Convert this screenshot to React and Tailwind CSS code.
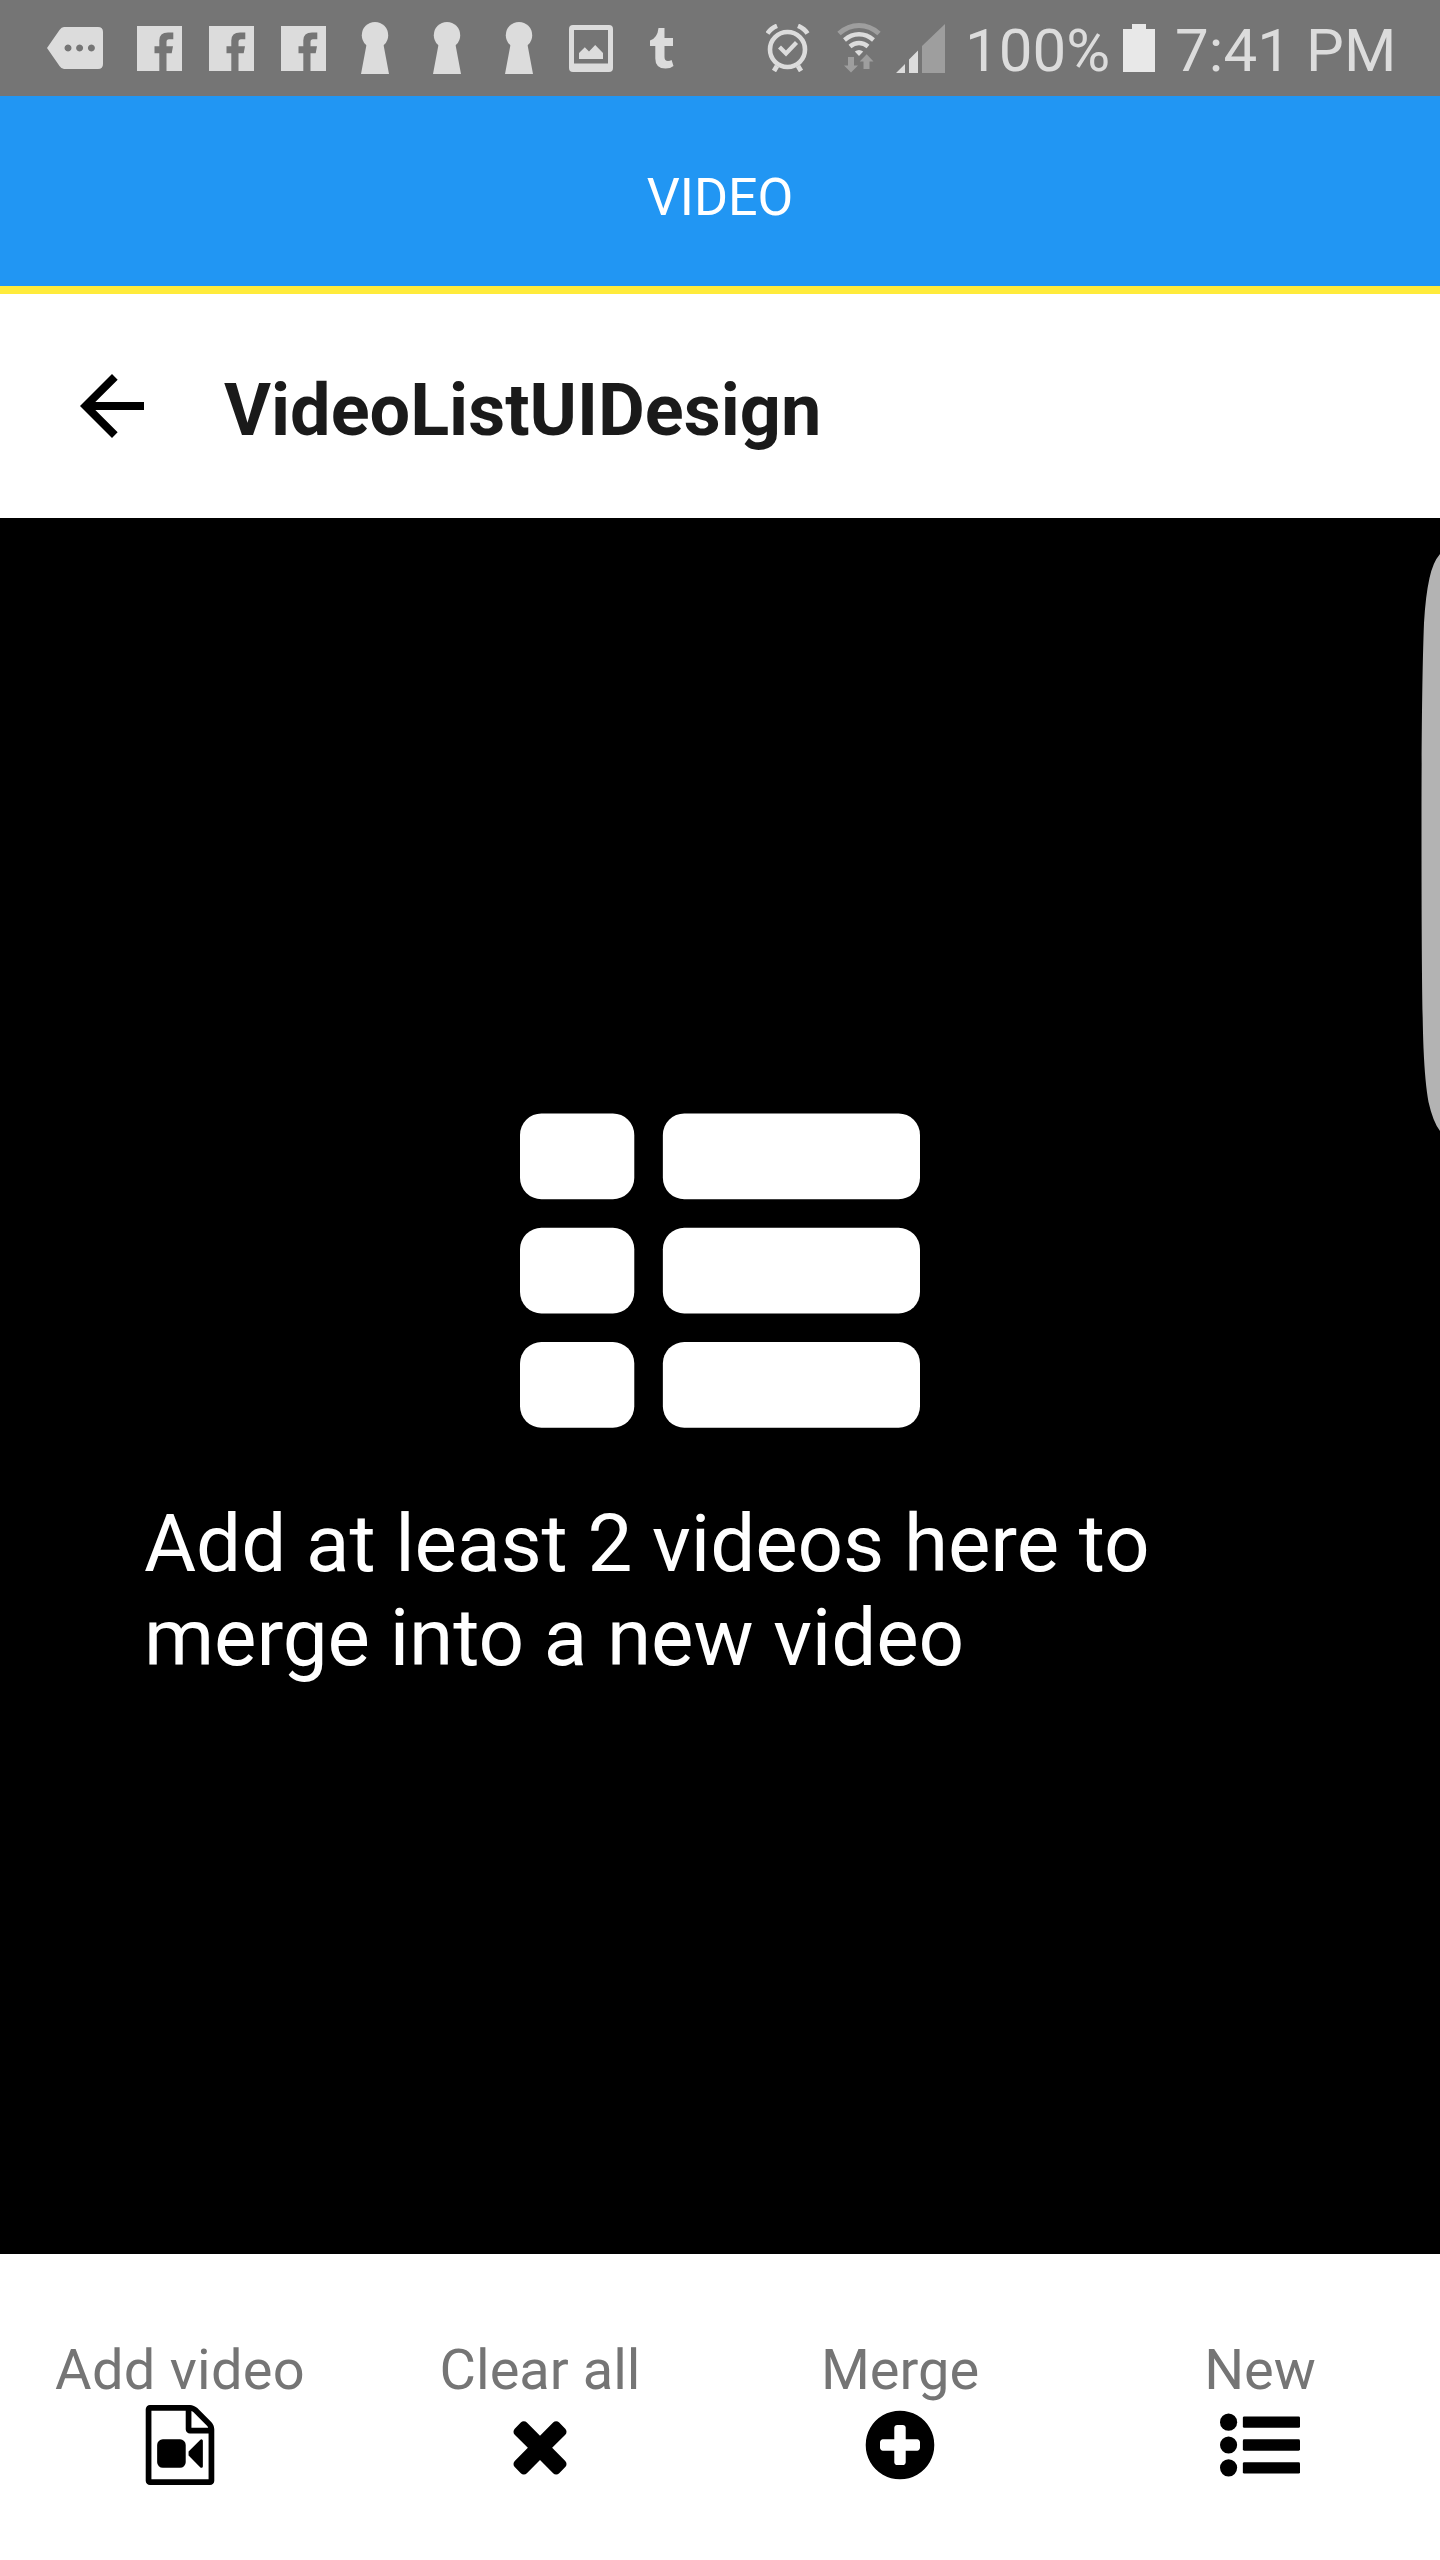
const GLYPH = '#dcdcdc';

function MoreTag() {
  return (
    <svg className="ml-[47px] h-[42px] w-14" viewBox="0 0 56 42" fill={GLYPH}>
      <path fillRule="evenodd" d="M0 21L12.5 3Q14.500 0 17 0H51Q56 0 56 5V37Q56 42 51 42H17Q14.500 42 12.500 39ZM21 17.500a3.500 3.500 0 1 0 .01 0ZM32.600 17.500a3.500 3.500 0 1 0 .01 0ZM44.400 17.500a3.500 3.500 0 1 0 .01 0Z" />
    </svg>
  );
}

function FacebookIcon({ className }) {
  return (
    <svg className={`h-[45px] w-[45px] ${className}`} viewBox="0 0 45 45" fill={GLYPH}>
      <path d="M0 0H45V45H29.500V27.300H34.700L36 20.200H29.500V16Q29.500 13.300 32 13.300H36.300V6.500H31Q22.300 6.500 22.300 14.500V20.200H17.500V27.300H22.300V45H0Z" />
    </svg>
  );
}

function KeyholeIcon({ className }) {
  return (
    <svg className={`h-[52px] w-7 ${className}`} viewBox="0 0 28 52" fill={GLYPH}>
      <circle cx="14" cy="13.200" r="13.200" />
      <path d="M6 20H22L28 52H0Z" />
    </svg>
  );
}

function PictureIcon() {
  return (
    <svg className="ml-9 h-[47px] w-11" viewBox="0 0 44 47" fill={GLYPH}>
      <path fillRule="evenodd" d="M4 0H40Q44 0 44 4V43Q44 47 40 47H4Q0 47 0 43V4Q0 0 4 0ZM5 5V38.500H39V5Z" />
      <path d="M10 34V28L15.800 22.200L20 26.400L26.200 20L34 28V34Z" />
    </svg>
  );
}

function TumblrIcon() {
  return (
    <svg className="ml-[37px] h-[41px] w-6" viewBox="0 0 24 41" fill={GLYPH}>
      <path d="M8.500 0H14.500V10H23V18H14.500V29Q14.500 33 18 33Q20 33 21.600 32L23.500 38Q20.500 40.500 15.500 40.500Q5.300 40.500 5.300 30.500V18H0V12.500Q7.500 10 8.500 0Z" />
    </svg>
  );
}

function AlarmIcon() {
  return (
    <svg className="ml-[92px] h-12 w-[44px]" viewBox="0 0 44 48" fill="none" stroke={GLYPH}>
      <circle cx="21.500" cy="25.500" r="17.500" strokeWidth="4.600" />
      <path d="M13.500 23L20 29.500L30.500 18.500" strokeWidth="4.200" />
      <path d="M11 42L8 47M32 42L35 47" strokeWidth="4.800" />
      <path d="M1.500 9.500Q4.500 4.500 11 1.800M41.500 9.500Q38.500 4.500 32 1.800" strokeWidth="4.600" />
    </svg>
  );
}

function WifiIcon() {
  return (
    <svg className="ml-[27px] h-[50px] w-[44px]" viewBox="0 0 44 50" fill="none">
      <path d="M2 10.500Q11 2.500 22 2.500T42 10.500" stroke="#9e9e9e" strokeWidth="5" />
      <path d="M7.500 17Q14 11.300 22 11.300T36.500 17M13 23.500Q17 20 22 20T31 23.500" stroke={GLYPH} strokeWidth="4.400" />
      <path d="M17.800 28.600Q22 25.400 26.200 28.600L22 33Z" fill={GLYPH} />
      <path d="M11 34H17V42.500H21L14 49.500L7 42.500H11ZM26.500 46V38.500H22.700L29.700 31.300L36.500 38.500H32.500V46Z" fill="#9e9e9e" />
    </svg>
  );
}

function SignalIcon() {
  return (
    <svg className="ml-[15px] h-[49px] w-[49px]" viewBox="0 0 49 49" fill={GLYPH}>
      <path d="M0 49L9 40V49ZM13 49V35.500L22 26.500V49Z" />
      <path d="M26 49V22L49 0V49Z" fill="#9e9e9e" />
    </svg>
  );
}

function StatusBar() {
  return (
    <div className="flex h-24 items-center bg-[#757575]">
      <MoreTag />
      <FacebookIcon className="ml-[34px]" />
      <FacebookIcon className="ml-[27px]" />
      <FacebookIcon className="ml-[27px]" />
      <KeyholeIcon className="ml-[35px]" />
      <KeyholeIcon className="ml-11" />
      <KeyholeIcon className="ml-11" />
      <PictureIcon />
      <TumblrIcon />
      <AlarmIcon />
      <WifiIcon />
      <SignalIcon />
      <span className="mt-[5px] ml-5 w-[150px] text-[60px] leading-none whitespace-nowrap text-[#dcdcdc]">100%</span>
      <svg className="ml-[8px] h-12 w-8" viewBox="0 0 32 48" fill="#e8e8e8">
        <path d="M9 0H23V5H32V48H0V5H9Z" />
      </svg>
      <span className="mt-[5px] ml-5 text-[60px] leading-none tracking-[0.1px] whitespace-nowrap text-[#dcdcdc]">7:41 PM</span>
    </div>
  );
}

function ListGraphic() {
  return (
    <svg className="h-[315px] w-[400px]" viewBox="0 0 1792 1411" fill="#fff">
      {[2, 514, 1026].map((y) => (
        <g key={y}>
          <rect x="0" y={y} width="512" height="384" rx="96" />
          <rect x="640" y={y} width="1152" height="384" rx="96" />
        </g>
      ))}
    </svg>
  );
}

const ACTIONS = [
  {
    label: 'Add video',
    tracking: 'tracking-[0.25px]',
    icon: <path d="M1596 380q28 28 48 76t20 88v1152q0 40-28 68t-68 28h-1344q-40 0-68-28t-28-68v-1600q0-40 28-68t68-28h896q40 0 88 20t76 48zm-444-244v376h376q-10-29-22-41l-313-313q-12-12-41-22zm384 1528v-1024h-416q-40 0-68-28t-28-68v-416h-768v1536h1280zm-640-896q52 0 90 38t38 90v384q0 52-38 90t-90 38h-384q-52 0-90-38t-38-90v-384q0-52 38-90t90-38h384zm492 2q20 8 20 30v576q0 22-20 30-8 2-12 2-14 0-23-9l-265-266v-90l265-266q9-9 23-9 4 0 12 2z" />,
  },
  {
    label: 'Clear all',
    tracking: 'tracking-normal',
    icon: <path d="M1490 1322q0 40-28 68l-136 136q-28 28-68 28t-68-28l-294-294-294 294q-28 28-68 28t-68-28l-136-136q-28-28-28-68t28-68l294-294-294-294q-28-28-28-68t28-68l136-136q28-28 68-28t68 28l294 294 294-294q28-28 68-28t68 28l136 136q28 28 28 68t-28 68l-294 294 294 294q28 28 28 68z" />,
  },
  {
    label: 'Merge',
    tracking: 'tracking-normal',
    icon: <path d="M1344 960v-128q0-26-19-45t-45-19h-256v-256q0-26-19-45t-45-19h-128q-26 0-45 19t-19 45v256h-256q-26 0-45 19t-19 45v128q0 26 19 45t45 19h256v256q0 26 19 45t45 19h128q26 0 45-19t19-45v-256h256q26 0 45-19t19-45zm320-64q0 209-103 385.500t-279.500 279.500-385.500 103-385.500-103-279.500-279.500-103-385.500 103-385.500 279.500-279.500 385.500-103 385.500 103 279.500 279.500 103 385.500z" />,
  },
  {
    label: 'New',
    tracking: 'tracking-normal',
    icon: [384, 896, 1408].map((y) => (
      <g key={y}>
        <circle cx="192" cy={y} r="192" />
        <rect x="512" y={y - 128} width="1280" height="256" rx="32" />
      </g>
    )),
  },
];

export default function App() {
  return (
    <div className="flex h-[2560px] w-[1440px] flex-col overflow-hidden bg-white font-['Roboto',sans-serif]">
      <StatusBar />
      <div className="flex h-[198px] items-center justify-center border-b-8 border-[#ffeb3b] bg-[#2196f3] pt-[13px] text-[52px] leading-none text-white">
        VIDEO
      </div>
      <header className="flex h-56 items-center bg-white pl-16">
        <svg className="h-24 w-24" viewBox="0 0 24 24">
          <path d="M20 11H7.830l5.590-5.590L12 4l-8 8 8 8 1.410-1.410L7.830 13H20v-2z" />
        </svg>
        <h1 className="mt-[9px] ml-16 text-[72px] leading-none font-bold text-[#1a1a1a]">VideoListUIDesign</h1>
      </header>
      <main className="relative flex h-[1736px] flex-col items-center bg-black pt-[595px]">
        <ListGraphic />
        <p className="mt-[69px] w-[1152px] text-[80px] leading-[94px] tracking-[-0.08px] text-white">
          Add at least 2 videos here to
          <br />
          merge into a new video
        </p>
        <svg className="absolute top-[30px] right-0 h-[590px] w-[19px]" viewBox="0 0 19 590" fill="#b3b3b3">
          <path d="M19 6Q12 14 8.500 30Q4.500 48 3 75C1.200 120 .5 200 .5 270C.5 380 1 460 2.500 500Q4 535 7.500 554Q12 574 19 583Z" />
        </svg>
      </main>
      <nav className="grid h-[306px] grid-cols-4 pt-[83px]">
        {ACTIONS.map(({ label, tracking, icon }) => (
          <div key={label} className="flex flex-col items-center">
            <span className={`h-[68px] text-[56px] leading-[66px] text-[#757575] ${tracking}`}>{label}</span>
            <svg className="mt-[0.4px] h-20 w-20" viewBox="0 0 1792 1792">{icon}</svg>
          </div>
        ))}
      </nav>
    </div>
  );
}
